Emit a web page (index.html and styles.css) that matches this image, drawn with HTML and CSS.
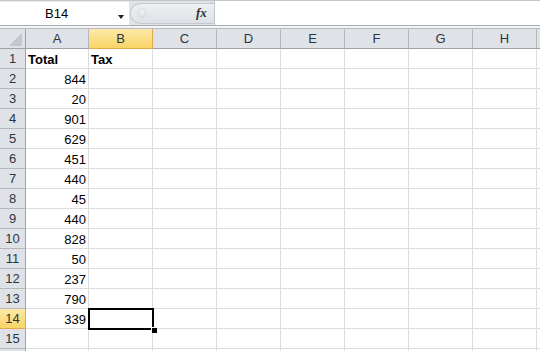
FILE: index.html
```html
<!DOCTYPE html>
<html lang="en">

<head>
  <meta charset="utf-8">
  <title>Book1 - Sheet1</title>
  <link rel="stylesheet" href="styles.css">
</head>

<body>
  <div class="formula-bar">
    <div class="namebox">
      <span class="name">B14</span>
      <span class="arrow"></span>
    </div>
    <div class="fx-area">
      <div class="pill"><span class="knob"></span></div>
      <span class="fx">fx</span>
    </div>
    <div class="formula"></div>
  </div>
  <div class="bar-gap"></div>

  <div class="sheet">
    <!-- header row -->
    <div class="corner"><span class="tri"></span></div>
    <div class="hdr">A</div>
    <div class="hdr active">B</div>
    <div class="hdr">C</div>
    <div class="hdr">D</div>
    <div class="hdr">E</div>
    <div class="hdr">F</div>
    <div class="hdr">G</div>
    <div class="hdr">H</div>
    <div class="hdr"></div>

    <div class="rowhdr">1</div>
    <div class="cell bold">Total</div><div class="cell bold">Tax</div>
    <div class="cell"></div><div class="cell"></div><div class="cell"></div><div class="cell"></div><div class="cell"></div><div class="cell"></div><div class="cell"></div>

    <div class="rowhdr">2</div>
    <div class="cell num">844</div><div class="cell"></div>
    <div class="cell"></div><div class="cell"></div><div class="cell"></div><div class="cell"></div><div class="cell"></div><div class="cell"></div><div class="cell"></div>

    <div class="rowhdr">3</div>
    <div class="cell num">20</div><div class="cell"></div>
    <div class="cell"></div><div class="cell"></div><div class="cell"></div><div class="cell"></div><div class="cell"></div><div class="cell"></div><div class="cell"></div>

    <div class="rowhdr">4</div>
    <div class="cell num">901</div><div class="cell"></div>
    <div class="cell"></div><div class="cell"></div><div class="cell"></div><div class="cell"></div><div class="cell"></div><div class="cell"></div><div class="cell"></div>

    <div class="rowhdr">5</div>
    <div class="cell num">629</div><div class="cell"></div>
    <div class="cell"></div><div class="cell"></div><div class="cell"></div><div class="cell"></div><div class="cell"></div><div class="cell"></div><div class="cell"></div>

    <div class="rowhdr">6</div>
    <div class="cell num">451</div><div class="cell"></div>
    <div class="cell"></div><div class="cell"></div><div class="cell"></div><div class="cell"></div><div class="cell"></div><div class="cell"></div><div class="cell"></div>

    <div class="rowhdr">7</div>
    <div class="cell num">440</div><div class="cell"></div>
    <div class="cell"></div><div class="cell"></div><div class="cell"></div><div class="cell"></div><div class="cell"></div><div class="cell"></div><div class="cell"></div>

    <div class="rowhdr">8</div>
    <div class="cell num">45</div><div class="cell"></div>
    <div class="cell"></div><div class="cell"></div><div class="cell"></div><div class="cell"></div><div class="cell"></div><div class="cell"></div><div class="cell"></div>

    <div class="rowhdr">9</div>
    <div class="cell num">440</div><div class="cell"></div>
    <div class="cell"></div><div class="cell"></div><div class="cell"></div><div class="cell"></div><div class="cell"></div><div class="cell"></div><div class="cell"></div>

    <div class="rowhdr">10</div>
    <div class="cell num">828</div><div class="cell"></div>
    <div class="cell"></div><div class="cell"></div><div class="cell"></div><div class="cell"></div><div class="cell"></div><div class="cell"></div><div class="cell"></div>

    <div class="rowhdr">11</div>
    <div class="cell num">50</div><div class="cell"></div>
    <div class="cell"></div><div class="cell"></div><div class="cell"></div><div class="cell"></div><div class="cell"></div><div class="cell"></div><div class="cell"></div>

    <div class="rowhdr">12</div>
    <div class="cell num">237</div><div class="cell"></div>
    <div class="cell"></div><div class="cell"></div><div class="cell"></div><div class="cell"></div><div class="cell"></div><div class="cell"></div><div class="cell"></div>

    <div class="rowhdr">13</div>
    <div class="cell num">790</div><div class="cell"></div>
    <div class="cell"></div><div class="cell"></div><div class="cell"></div><div class="cell"></div><div class="cell"></div><div class="cell"></div><div class="cell"></div>

    <div class="rowhdr active">14</div>
    <div class="cell num">339</div>
    <div class="cell selected"><span class="sel-box"></span><span class="sel-handle"></span></div>
    <div class="cell"></div><div class="cell"></div><div class="cell"></div><div class="cell"></div><div class="cell"></div><div class="cell"></div><div class="cell"></div>

    <div class="rowhdr">15</div>
    <div class="cell"></div><div class="cell"></div>
    <div class="cell"></div><div class="cell"></div><div class="cell"></div><div class="cell"></div><div class="cell"></div><div class="cell"></div><div class="cell"></div>

    <!-- row 16 only shows its top edge -->
    <div class="rowhdr"></div>
    <div class="cell"></div><div class="cell"></div>
    <div class="cell"></div><div class="cell"></div><div class="cell"></div><div class="cell"></div><div class="cell"></div><div class="cell"></div><div class="cell"></div>
  </div>
</body>

</html>
```

FILE: styles.css
```css
body {
  margin: 0;
  padding: 0;
  width: 540px;
  height: 351px;
  overflow: hidden;
  background-color: #fff;
  font-family: 'Liberation Sans', Arial, sans-serif;
  font-size: 13px;
  color: #000;
}

/* formula bar */
.formula-bar {
  display: flex;
  height: 26px;
  box-sizing: border-box;
  border-top: 1px solid #c3c7cc;
  border-bottom: 1px solid #a9adb3;
  background-color: #dfe3e8;
}

.namebox {
  position: relative;
  width: 129px;
  background-color: #fff;
  border-top: 1px solid #e8ebee;
}

.name {
  position: absolute;
  left: 45px;
  top: 4px;
  line-height: 16px;
}

.arrow {
  position: absolute;
  left: 118px;
  top: 13px;
  width: 0;
  height: 0;
  border-left: 3px solid transparent;
  border-right: 3px solid transparent;
  border-top: 4px solid #222;
}

.fx-area {
  position: relative;
  width: 85px;
}

.pill {
  position: absolute;
  left: 1px;
  top: 2px;
  right: 0;
  height: 21px;
  box-sizing: border-box;
  border: 1px solid #c6cace;
  border-right: none;
  border-radius: 11px 0 0 11px;
  background: linear-gradient(#eef0f3, #dde1e6);
}

.knob {
  position: absolute;
  left: 6px;
  top: 4px;
  width: 10px;
  height: 10px;
  border-radius: 50%;
  background: radial-gradient(circle at 50% 40%, #f4f5f7, #c9cdd2);
}

.fx {
  position: absolute;
  left: 67px;
  top: 4px;
  font-family: 'Liberation Serif', serif;
  font-style: italic;
  font-weight: bold;
  font-size: 13px;
  line-height: 16px;
  color: #333;
}

.formula {
  flex: 1;
  background-color: #fff;
  border-left: 1px solid #c3c7cc;
}

.bar-gap {
  height: 2px;
  background-color: #f3f4f6;
}

/* grid */
.sheet {
  display: grid;
  grid-template-columns: 26px 63px repeat(8, 64px);
  grid-auto-rows: 20px;
  border-top: 1px solid #b7bbc0;
}

.corner,
.hdr,
.rowhdr,
.cell {
  box-sizing: border-box;
  border-right: 1px solid #dadcdd;
  border-bottom: 1px solid #dadcdd;
}

.corner {
  position: relative;
  background-color: #dfe3e8;
  border-right: 1px solid #9da1a6;
  border-bottom: 1px solid #9da1a6;
}

.tri {
  position: absolute;
  right: 3px;
  bottom: 2px;
  width: 0;
  height: 0;
  border-left: 13px solid transparent;
  border-bottom: 13px solid #c3c7cc;
}

.hdr {
  background-color: #dfe3e8;
  border-right: 1px solid #b4b8bd;
  border-bottom: 1px solid #9da1a6;
  color: #2c3440;
  text-align: center;
  line-height: 19px;
}

.rowhdr {
  background-color: #dfe3e8;
  border-right: 1px solid #9da1a6;
  border-bottom: 1px solid #b4b8bd;
  color: #2c3440;
  text-align: center;
  line-height: 19px;
}

.hdr.active {
  background: linear-gradient(#fde9a7, #f9d566);
  border-right-color: #e2a84b;
  border-bottom-color: #e2a84b;
}

.rowhdr.active {
  background: linear-gradient(#fde9a7, #f9d566);
  border-right-color: #e2a84b;
  border-bottom-color: #e2a84b;
}

.cell {
  padding: 3px 2px 0;
  line-height: 16px;
  white-space: nowrap;
  overflow: hidden;
}

.cell.num {
  text-align: right;
}

.cell.bold {
  font-weight: bold;
}

.cell.selected {
  position: relative;
  overflow: visible;
}

.sel-box {
  position: absolute;
  left: -1px;
  top: -1px;
  right: -2px;
  bottom: -2px;
  border: 2px solid #000;
  z-index: 2;
}

.sel-handle {
  position: absolute;
  right: -5px;
  bottom: -5px;
  width: 5px;
  height: 5px;
  background-color: #000;
  border-left: 1px solid #fff;
  border-top: 1px solid #fff;
  z-index: 3;
}
```
